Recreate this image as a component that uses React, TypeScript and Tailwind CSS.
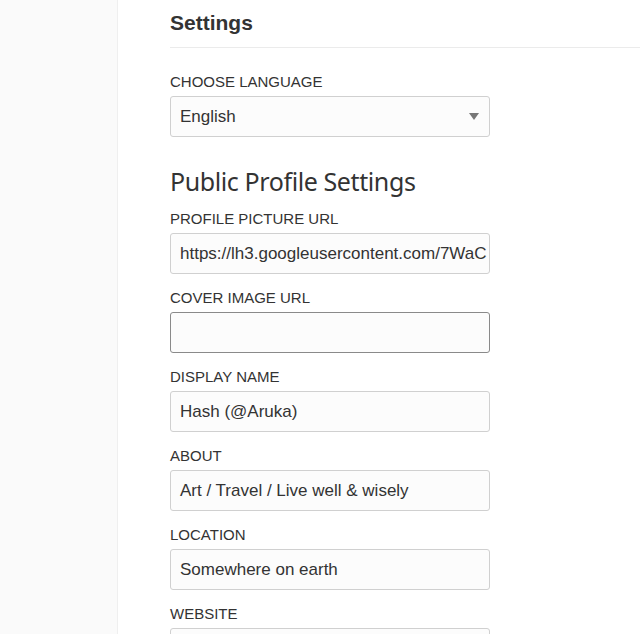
import React from "react";

const fields = [
  { label: "PROFILE PICTURE URL", value: "https://lh3.googleusercontent.com/7WaC", focused: false },
  { label: "COVER IMAGE URL", value: "", focused: true },
  { label: "DISPLAY NAME", value: "Hash (@Aruka)", focused: false },
  { label: "ABOUT", value: "Art / Travel / Live well & wisely", focused: false },
  { label: "LOCATION", value: "Somewhere on earth", focused: false },
  { label: "WEBSITE", value: "", focused: false },
];

export default function App() {
  return (
    <div className="flex h-[634px] w-[640px] overflow-hidden bg-white text-[#333]" style={{ fontFamily: '"Liberation Sans", Arial, sans-serif' }}>
      <div className="w-[118px] shrink-0 border-r border-[#efefef] bg-[#fafafa]" />
      <div className="flex-1 pl-[52px]">
        <h1 className="pt-[10px] text-[21px] font-bold leading-[26px] text-[#333]">Settings</h1>
        <div className="mt-[11px] border-t border-[#ebebeb]" />
        <div className="w-[320px]">
          <div className="mt-[24px] text-[15px] leading-[20px] text-[#333]">CHOOSE LANGUAGE</div>
          <div className="mt-[4px] flex h-[41px] items-center justify-between rounded-[3px] border border-[#d0d0d0] bg-[#fcfcfc] pl-[9px] pr-[10px]">
            <span className="text-[17px] text-[#333]">English</span>
            <svg width="10" height="7" viewBox="0 0 10 7">
              <path d="M0 0 L10 0 L5 7 Z" fill="#777" />
            </svg>
          </div>
          <h2
            className="mt-[28px] text-[25px] font-normal leading-[32px] text-[#333]"
            style={{ fontFamily: '"Noto Sans", "Open Sans", sans-serif', letterSpacing: "-0.4px" }}
          >
            Public Profile Settings
          </h2>
          <div className="mt-[12px] flex flex-col gap-[14px]">
            {fields.map((f) => (
              <div key={f.label} className="flex flex-col">
                <label className="text-[15px] leading-[20px] text-[#333]">{f.label}</label>
                <div
                  className={
                    f.focused
                      ? "mt-[4px] flex h-[41px] items-center overflow-hidden rounded-[3px] border border-[#8a8a8a] bg-[#fcfcfc] pl-[9px]"
                      : "mt-[4px] flex h-[41px] items-center overflow-hidden rounded-[3px] border border-[#d0d0d0] bg-[#fcfcfc] pl-[9px]"
                  }
                >
                  <span className="whitespace-nowrap text-[17px] text-[#333]">{f.value}</span>
                </div>
              </div>
            ))}
          </div>
        </div>
      </div>
    </div>
  );
}
